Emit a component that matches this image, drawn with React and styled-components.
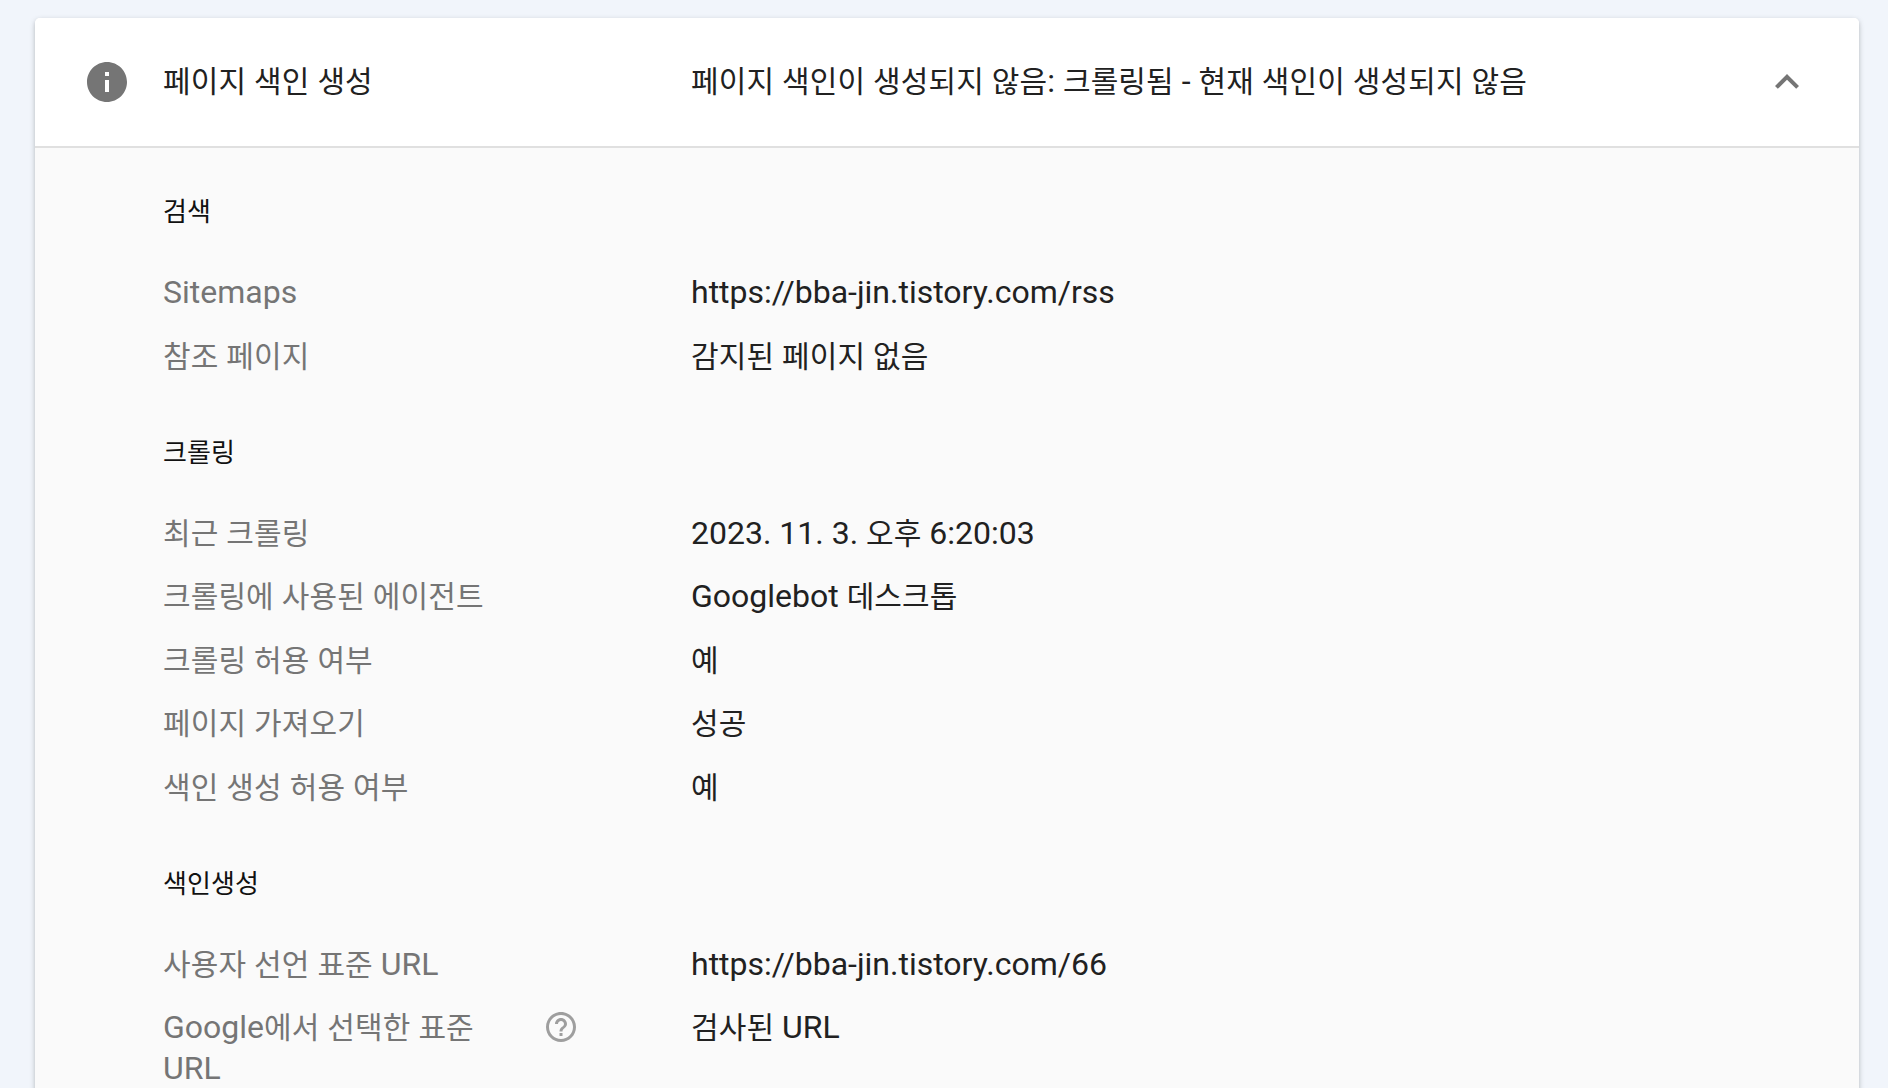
import React from 'react';
import styled, { createGlobalStyle } from 'styled-components';

const GlobalStyle = createGlobalStyle`
  html, body {
    margin: 0;
    height: 100%;
    overflow: hidden;
    background: #f1f5fb;
  }
  body {
    font-family: Roboto, "Noto Sans CJK KR", sans-serif;
    letter-spacing: 0.1px;
  }
`;

const sections = [
  {
    title: '검색',
    rows: [
      { label: 'Sitemaps', value: 'https://bba-jin.tistory.com/rss' },
      { label: '참조 페이지', value: '감지된 페이지 없음' },
    ],
  },
  {
    title: '크롤링',
    rows: [
      { label: '최근 크롤링', value: '2023. 11. 3. 오후 6:20:03' },
      { label: '크롤링에 사용된 에이전트', value: 'Googlebot 데스크톱' },
      { label: '크롤링 허용 여부', value: '예' },
      { label: '페이지 가져오기', value: '성공' },
      { label: '색인 생성 허용 여부', value: '예' },
    ],
  },
  {
    title: '색인생성',
    rows: [
      { label: '사용자 선언 표준 URL', value: 'https://bba-jin.tistory.com/66' },
      { label: 'Google에서 선택한 표준 URL', value: '검사된 URL', help: true },
    ],
  },
];

// latin runs are set a bit larger than the hangul, as in the original page
const Mixed = ({ text }) =>
  text.split(/([\u0000-\u024f]+)/).map((part, i) =>
    i % 2 ? <Latin key={i}>{part}</Latin> : part
  );

const App = () => (
  <Page>
    <GlobalStyle />
    <Card>
      <Header>
        <InfoIcon viewBox="0 0 24 24">
          <path d="M12 2C6.48 2 2 6.48 2 12s4.48 10 10 10 10-4.48 10-10S17.52 2 12 2zm1 15h-2v-6h2v6zm0-8h-2V7h2v2z" />
        </InfoIcon>
        <HeaderTitle><Mixed text="페이지 색인 생성" /></HeaderTitle>
        <HeaderValue><Mixed text="페이지 색인이 생성되지 않음: 크롤링됨 - 현재 색인이 생성되지 않음" /></HeaderValue>
        <Chevron viewBox="0 0 24 24">
          <path d="M12 8l-6 6 1.41 1.41L12 10.83l4.59 4.58L18 14z" />
        </Chevron>
      </Header>
      <Body>
        {sections.map((section) => (
          <Section key={section.title}>
            <SectionTitle>{section.title}</SectionTitle>
            {section.rows.map((row) => (
              <Row key={row.label}>
                <Label>
                  <Mixed text={row.label} />
                  {row.help && (
                    <HelpIcon viewBox="0 0 24 24">
                      <path d="M11 18h2v-2h-2v2zm1-16C6.48 2 2 6.48 2 12s4.48 10 10 10 10-4.48 10-10S17.52 2 12 2zm0 18c-4.41 0-8-3.59-8-8s3.59-8 8-8 8 3.59 8 8-3.59 8-8 8zm0-14c-2.21 0-4 1.79-4 4h2c0-1.1.9-2 2-2s2 .9 2 2c0 2-3 1.75-3 5h2c0-2.25 3-2.5 3-5 0-2.21-1.79-4-4-4z" />
                    </HelpIcon>
                  )}
                </Label>
                <Value><Mixed text={row.value} /></Value>
              </Row>
            ))}
          </Section>
        ))}
      </Body>
    </Card>
  </Page>
);

const Latin = styled.span`
  font-size: 32px;
  line-height: 1;
  letter-spacing: 0;
`;

const Page = styled.div`
  height: 1088px;
  overflow: hidden;
  padding: 18px 29px 0 35px;
  box-sizing: border-box;
`;

const Card = styled.div`
  background: #fafafa;
  border-radius: 5px 5px 0 0;
  box-shadow: 0 2px 5px rgba(60, 64, 67, 0.35);
`;

const Header = styled.div`
  display: flex;
  align-items: center;
  height: 128px;
  padding-left: 48px;
  padding-right: 48px;
  background: #fff;
  border-radius: 5px 5px 0 0;
  border-bottom: 2px solid #e0e0e0;
`;

const InfoIcon = styled.svg`
  width: 48px;
  height: 48px;
  flex: none;
  fill: #757575;
  margin-right: 32px;
`;

const HeaderTitle = styled.div`
  width: 528px;
  flex: none;
  font-size: 30px;
  line-height: 40px;
  color: #212121;
`;

const HeaderValue = styled.div`
  flex: 1;
  font-size: 30px;
  line-height: 40px;
  color: #212121;
`;

const Chevron = styled.svg`
  width: 48px;
  height: 48px;
  flex: none;
  fill: #757575;
`;

const Body = styled.div`
  padding: 44px 0 0 128px;
`;

const Section = styled.section`
  margin-bottom: 33.5px;
`;

const SectionTitle = styled.h3`
  margin: 0 0 40px;
  font-size: 26px;
  line-height: 40px;
  font-weight: 400;
  color: #111;
`;

const Row = styled.div`
  display: flex;
  align-items: flex-start;
  padding-bottom: 22.5px;
`;

const Label = styled.div`
  box-sizing: border-box;
  width: 528px;
  flex: none;
  padding-right: 188px;
  position: relative;
  font-size: 30px;
  line-height: 41px;
  color: #757575;
`;

const HelpIcon = styled.svg`
  position: absolute;
  top: 2px;
  left: 380px;
  width: 36px;
  height: 36px;
  fill: #9e9e9e;
`;

const Value = styled.div`
  font-size: 30px;
  line-height: 41px;
  color: #212121;
`;

export default App;
